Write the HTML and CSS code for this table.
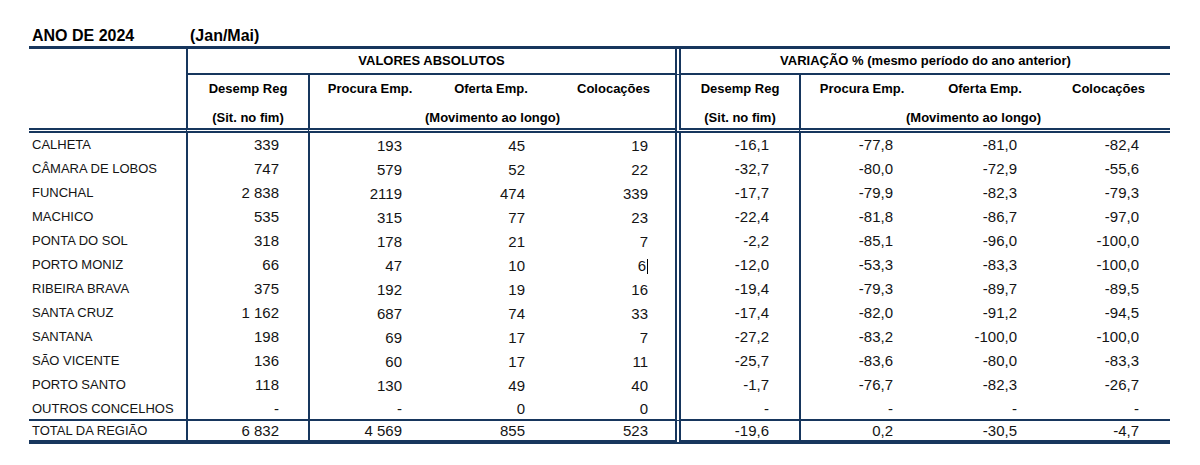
FILE: index.html
```html
<!DOCTYPE html>
<html lang="pt">
<head>
<meta charset="utf-8">
<title>Ano de 2024</title>
<link rel="stylesheet" href="styles.css">
</head>
<body>
<div class="page">
  <div class="title">
    <span class="title-year">ANO DE 2024</span>
    <span class="title-period">(Jan/Mai)</span>
  </div>
  <table class="sheet">
    <colgroup>
      <col class="w-name">
      <col class="w-122">
      <col class="w-122">
      <col class="w-122">
      <col class="w-123">
      <col class="w-124">
      <col class="w-124">
      <col class="w-124">
      <col class="w-123">
    </colgroup>
    <thead>
      <tr class="h1">
        <th class="corner" rowspan="3"></th>
        <th class="bl" colspan="4">VALORES ABSOLUTOS</th>
        <th class="bd" colspan="4">VARIAÇÃO % (mesmo período do ano anterior)</th>
      </tr>
      <tr class="h2">
        <th class="bl">Desemp Reg</th>
        <th class="bl">Procura Emp.</th>
        <th>Oferta Emp.</th>
        <th>Colocações</th>
        <th class="bd">Desemp Reg</th>
        <th class="bl">Procura Emp.</th>
        <th>Oferta Emp.</th>
        <th>Colocações</th>
      </tr>
      <tr class="h3">
        <th class="bl">(Sit. no fim)</th>
        <th class="bl" colspan="3">(Movimento ao longo)</th>
        <th class="bd">(Sit. no fim)</th>
        <th class="bl mov-right" colspan="3">(Movimento ao longo)</th>
      </tr>
    </thead>
    <tbody>
      <tr class="row"><td>CALHETA</td><td>339</td><td>193</td><td>45</td><td>19</td><td>-16,1</td><td>-77,8</td><td>-81,0</td><td>-82,4</td></tr>
      <tr class="row"><td>CÂMARA DE LOBOS</td><td>747</td><td>579</td><td>52</td><td>22</td><td>-32,7</td><td>-80,0</td><td>-72,9</td><td>-55,6</td></tr>
      <tr class="row"><td>FUNCHAL</td><td>2 838</td><td>2119</td><td>474</td><td>339</td><td>-17,7</td><td>-79,9</td><td>-82,3</td><td>-79,3</td></tr>
      <tr class="row"><td>MACHICO</td><td>535</td><td>315</td><td>77</td><td>23</td><td>-22,4</td><td>-81,8</td><td>-86,7</td><td>-97,0</td></tr>
      <tr class="row"><td>PONTA DO SOL</td><td>318</td><td>178</td><td>21</td><td>7</td><td>-2,2</td><td>-85,1</td><td>-96,0</td><td>-100,0</td></tr>
      <tr class="row"><td>PORTO MONIZ</td><td>66</td><td>47</td><td>10</td><td>6<span class="caret"></span></td><td>-12,0</td><td>-53,3</td><td>-83,3</td><td>-100,0</td></tr>
      <tr class="row"><td>RIBEIRA BRAVA</td><td>375</td><td>192</td><td>19</td><td>16</td><td>-19,4</td><td>-79,3</td><td>-89,7</td><td>-89,5</td></tr>
      <tr class="row"><td>SANTA CRUZ</td><td>1 162</td><td>687</td><td>74</td><td>33</td><td>-17,4</td><td>-82,0</td><td>-91,2</td><td>-94,5</td></tr>
      <tr class="row"><td>SANTANA</td><td>198</td><td>69</td><td>17</td><td>7</td><td>-27,2</td><td>-83,2</td><td>-100,0</td><td>-100,0</td></tr>
      <tr class="row"><td>SÃO VICENTE</td><td>136</td><td>60</td><td>17</td><td>11</td><td>-25,7</td><td>-83,6</td><td>-80,0</td><td>-83,3</td></tr>
      <tr class="row"><td>PORTO SANTO</td><td>118</td><td>130</td><td>49</td><td>40</td><td>-1,7</td><td>-76,7</td><td>-82,3</td><td>-26,7</td></tr>
      <tr class="row-last"><td>OUTROS CONCELHOS</td><td>-</td><td>-</td><td>0</td><td>0</td><td>-</td><td>-</td><td>-</td><td>-</td></tr>
      <tr class="row-total"><td>TOTAL DA REGIÃO</td><td>6 832</td><td>4 569</td><td>855</td><td>523</td><td>-19,6</td><td>0,2</td><td>-30,5</td><td>-4,7</td></tr>
    </tbody>
  </table>
</div>
</body>
</html>
```

FILE: styles.css
```css
* {
  box-sizing: border-box;
}

body {
  margin: 0;
  background: #ffffff;
  font-family: "Liberation Sans", Arial, sans-serif;
  color: #141414;
}

.page {
  padding: 26px 0 0 29px;
}

.title {
  display: flex;
  height: 20px;
  line-height: 20px;
  font-size: 16px;
  font-weight: bold;
  color: #000;
}

.title-year {
  width: 157px;
  padding-left: 3px;
}

.title-period {
  padding-left: 4px;
}

.sheet {
  border-collapse: separate;
  border-spacing: 0;
  table-layout: fixed;
  width: 1141px;
  border-top: 3px solid #17365d;
  font-size: 13px;
}

.w-name { width: 157px; }
.w-122 { width: 122px; }
.w-123 { width: 123px; }
.w-124 { width: 124px; }

.sheet th,
.sheet td {
  padding: 0;
  white-space: nowrap;
}

.sheet th {
  font-weight: bold;
  color: #000;
  text-align: center;
}

.sheet .bl {
  border-left: 2px solid #17365d;
}

.sheet .bd {
  border-left: 6px double #17365d;
}

.h1 th {
  line-height: 24px;
  border-bottom: 2px solid #17365d;
}

.h1 .corner {
  border-bottom: 5px double #17365d;
}

.h2 th {
  line-height: 27px;
}

.h3 th {
  line-height: 20px;
  padding-top: 6px;
  border-bottom: 5px double #17365d;
}

.h3 .mov-right {
  padding-right: 24px;
}

/* body */
.sheet tbody td {
  line-height: 24px;
  text-align: right;
  font-size: 15px;
}

.sheet tbody td:nth-child(1) {
  text-align: left;
  padding-left: 3px;
  font-size: 13px;
}

.sheet tbody td:nth-child(2) {
  border-left: 2px solid #17365d;
  padding-right: 29px;
}

.sheet tbody td:nth-child(3) {
  border-left: 2px solid #17365d;
  padding-right: 28px;
}

.sheet tbody td:nth-child(4),
.sheet tbody td:nth-child(5) {
  padding-right: 27px;
}

.sheet tbody td:nth-child(6) {
  border-left: 6px double #17365d;
  padding-right: 30px;
}

.sheet tbody td:nth-child(7) {
  border-left: 2px solid #17365d;
  padding-right: 30px;
}

.sheet tbody td:nth-child(8) {
  padding-right: 30px;
}

.sheet tbody td:nth-child(9) {
  padding-right: 31px;
}

.row td:nth-child(3),
.row td:nth-child(4),
.row td:nth-child(5) {
  line-height: 22px;
  padding-top: 2px;
}

.sheet .row-last td {
  line-height: 20px;
  padding-top: 2px;
  border-bottom: 2px solid #17365d;
}

.sheet .row-total td {
  line-height: 19px;
  border-bottom: 4px solid #17365d;
}

.caret {
  display: inline-block;
  width: 1px;
  height: 15px;
  margin-left: 1px;
  background: #000;
  vertical-align: -3px;
}
```
